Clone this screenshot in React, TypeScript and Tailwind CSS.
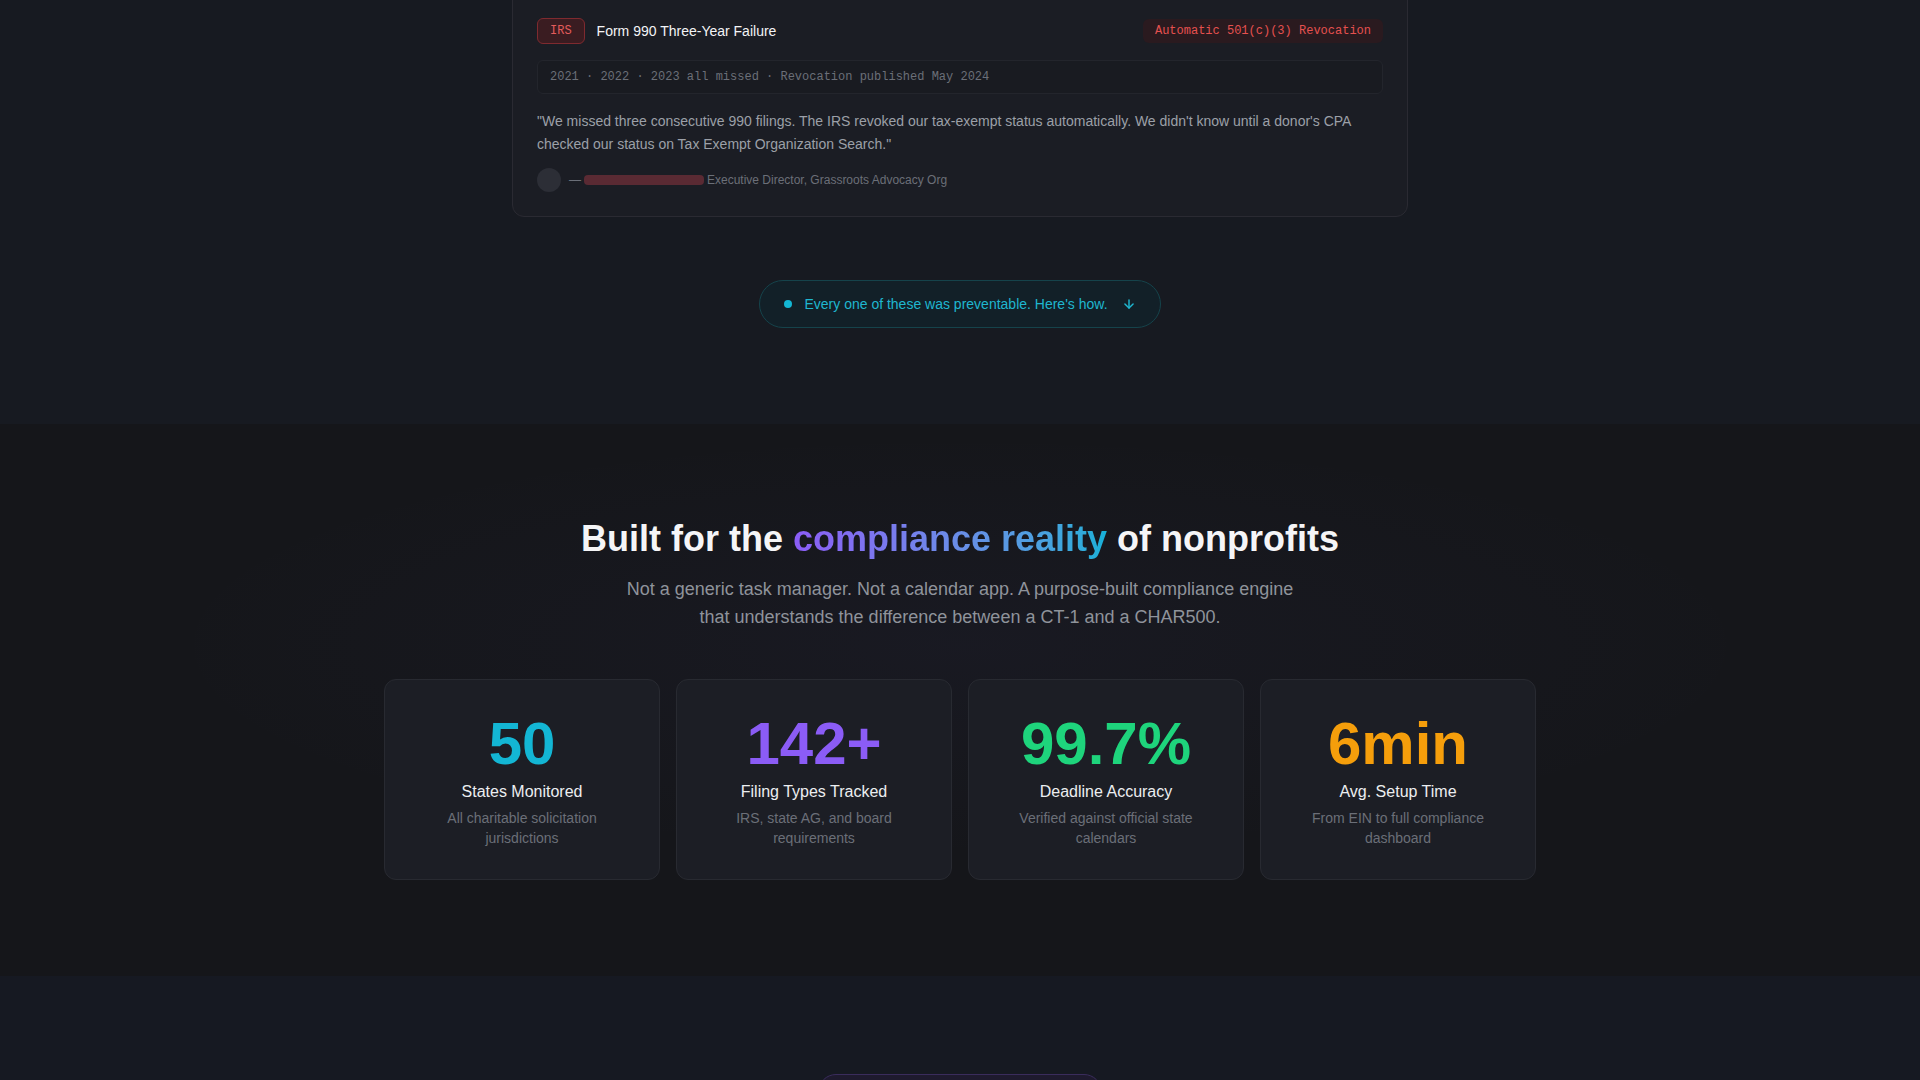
import React from "react";
import { ArrowDown } from "lucide-react";

const stats = [
  { value: "50", color: "text-[#13b6d4]", label: "States Monitored", desc: "All charitable solicitation jurisdictions" },
  { value: "142+", color: "text-[#8b5cf6]", label: "Filing Types Tracked", desc: "IRS, state AG, and board requirements" },
  { value: "99.7%", color: "text-[#1ed47c]", label: "Deadline Accuracy", desc: "Verified against official state calendars" },
  { value: "6min", color: "text-[#f59e0b]", label: "Avg. Setup Time", desc: "From EIN to full compliance dashboard" },
];

export default function App() {
  return (
    <div className="min-h-screen bg-[#16181f] font-['Liberation_Sans',Arial,sans-serif] overflow-hidden">
      {/* Section 1 */}
      <section className="bg-[#171a21] pb-24">
        <div className="mx-auto w-[896px] -mt-[7px]">
          <div className="rounded-b-xl border border-[#2a2a32] bg-[#1b1d24] p-6">
            <div className="flex items-center justify-between">
              <div className="flex items-center gap-3">
                <span className="rounded-md border border-[#7f2a2f] bg-[#3a1c21] px-3 py-1 font-['Liberation_Mono',monospace] text-xs text-[#e25b5b]">
                  IRS
                </span>
                <span className="text-sm text-[#f3f4f6]">Form 990 Three-Year Failure</span>
              </div>
              <span className="rounded-md bg-[#2a1a1f] px-3 py-1 font-['Liberation_Mono',monospace] text-xs text-[#e5514f]">
                Automatic 501(c)(3) Revocation
              </span>
            </div>
            <div className="mt-4 rounded-md border border-[#23252c] bg-[#191b21] px-3 py-2 font-['Liberation_Mono',monospace] text-xs text-[#6b6f78]">
              2021 · 2022 · 2023 all missed · Revocation published May 2024
            </div>
            <p className="mt-4 text-sm leading-relaxed text-[#9ca0a8]">
              "We missed three consecutive 990 filings. The IRS revoked our tax-exempt status automatically. We didn't know until a donor's CPA checked our status on Tax Exempt Organization Search."
            </p>
            <div className="mt-3 flex items-center gap-2">
              <div className="h-6 w-6 rounded-full bg-[#2c2e36]" />
              <span className="flex items-center text-xs text-[#6b6f78]">
                <span>—</span>
                <span className="mx-[3px] inline-block h-[10px] w-[120px] rounded-sm bg-[#5a2a33]" />
                <span>Executive Director, Grassroots Advocacy Org</span>
              </span>
            </div>
          </div>
        </div>
        <div className="mt-[63px] flex justify-center">
          <div className="flex items-center gap-3 rounded-full border border-[#15434b] bg-[#122028] px-6 py-[13px] text-sm text-[#1fb6cf]">
            <span className="h-2 w-2 rounded-full bg-[#13b6d4]" />
            <span>Every one of these was preventable. Here's how.</span>
            <ArrowDown size={14} strokeWidth={2.5} className="ml-0.5" />
          </div>
        </div>
      </section>

      {/* Section 2 */}
      <section className="relative bg-[#15161a] bg-[radial-gradient(ellipse_60%_55%_at_50%_40%,rgba(110,100,210,0.045),transparent_70%)] pt-[95px] pb-24">
        <div className="mx-auto flex max-w-6xl flex-col items-center">
          <h2 className="text-4xl font-bold leading-10 text-[#f5f5f7]">
            Built for the{" "}
            <span className="bg-gradient-to-r from-[#8b5cf6] to-[#14b0d8] bg-clip-text text-transparent">
              compliance reality
            </span>{" "}
            of nonprofits
          </h2>
          <p className="mt-4 max-w-2xl text-center text-lg leading-7 text-[#8f939b]">
            Not a generic task manager. Not a calendar app. A purpose-built compliance engine that understands the difference between a CT-1 and a CHAR500.
          </p>
          <div className="mt-12 grid w-full grid-cols-4 gap-4">
            {stats.map((s) => (
              <div
                key={s.label}
                className="flex flex-col items-center rounded-xl border border-[#282a31] bg-[#1c1e25] px-8 pt-[34px] pb-[31px] text-center"
              >
                <div className={`text-6xl font-bold leading-none ${s.color}`}>{s.value}</div>
                <div className="mt-[6px] text-base text-[#eceef1]">{s.label}</div>
                <div className="mt-1 text-sm leading-5 text-[#6b6f78]">{s.desc}</div>
              </div>
            ))}
          </div>
        </div>
      </section>

      {/* Section 3 */}
      <section className="bg-[#161922] pt-[98px] pb-24">
        <div className="flex justify-center">
          <div className="h-9 w-[284px] rounded-full border border-[#3a2c5c] bg-[#1e1a2e]" />
        </div>
      </section>
    </div>
  );
}
